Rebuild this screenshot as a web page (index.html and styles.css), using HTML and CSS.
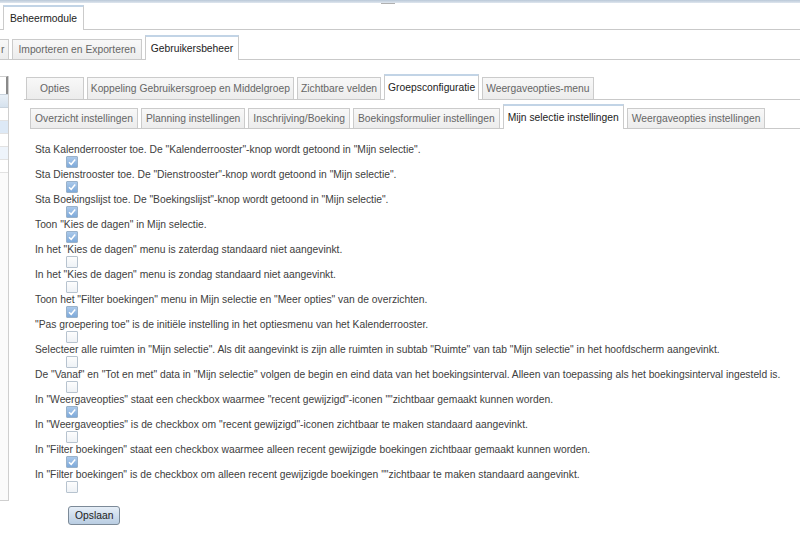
FILE: index.html
```html
<!DOCTYPE html>
<html lang="nl">

<head>
    <meta charset="UTF-8">
    <meta name="viewport" content="width=device-width, initial-scale=1.0">
    <title>Beheermodule</title>
    <link rel="stylesheet" href="styles.css">
</head>

<body>
    <div class="topbar"><span class="grip"></span></div>

    <div class="tabs tabs-main">
        <div class="tab active">Beheermodule</div>
    </div>

    <div class="tabs tabs-module">
        <div class="tab tab-cut">r</div>
        <div class="tab">Importeren en Exporteren</div>
        <div class="tab active">Gebruikersbeheer</div>
    </div>

    <div class="workspace">
        <div class="sidebar">
            <div class="side-field"></div>
            <div class="side-head"></div>
            <div class="side-row"></div>
            <div class="side-row selected"></div>
            <div class="side-row"></div>
            <div class="side-row light"></div>
            <div class="side-row"></div>
        </div>

        <div class="panel">
            <div class="tabs tabs-group">
                <div class="tab tab-wide">Opties</div>
                <div class="tab">Koppeling Gebruikersgroep en Middelgroep</div>
                <div class="tab">Zichtbare velden</div>
                <div class="tab active">Groepsconfiguratie</div>
                <div class="tab">Weergaveopties-menu</div>
            </div>

            <div class="tabs tabs-sub">
                <div class="tab">Overzicht instellingen</div>
                <div class="tab">Planning instellingen</div>
                <div class="tab">Inschrijving/Boeking</div>
                <div class="tab">Boekingsformulier instellingen</div>
                <div class="tab active">Mijn selectie instellingen</div>
                <div class="tab">Weergaveopties instellingen</div>
            </div>

            <form class="settings">
                <div class="setting">
                    <div class="label">Sta Kalenderrooster toe. De "Kalenderrooster"-knop wordt getoond in "Mijn selectie".</div>
                    <span class="check on"></span>
                </div>
                <div class="setting">
                    <div class="label">Sta Dienstrooster toe. De "Dienstrooster"-knop wordt getoond in "Mijn selectie".</div>
                    <span class="check on"></span>
                </div>
                <div class="setting">
                    <div class="label">Sta Boekingslijst toe. De "Boekingslijst"-knop wordt getoond in "Mijn selectie".</div>
                    <span class="check on"></span>
                </div>
                <div class="setting">
                    <div class="label">Toon "Kies de dagen" in Mijn selectie.</div>
                    <span class="check on"></span>
                </div>
                <div class="setting">
                    <div class="label">In het "Kies de dagen" menu is zaterdag standaard niet aangevinkt.</div>
                    <span class="check"></span>
                </div>
                <div class="setting">
                    <div class="label">In het "Kies de dagen" menu is zondag standaard niet aangevinkt.</div>
                    <span class="check"></span>
                </div>
                <div class="setting">
                    <div class="label">Toon het "Filter boekingen" menu in Mijn selectie en "Meer opties" van de overzichten.</div>
                    <span class="check on"></span>
                </div>
                <div class="setting">
                    <div class="label">"Pas groepering toe" is de initiële instelling in het optiesmenu van het Kalenderrooster.</div>
                    <span class="check"></span>
                </div>
                <div class="setting">
                    <div class="label">Selecteer alle ruimten in "Mijn selectie". Als dit aangevinkt is zijn alle ruimten in subtab "Ruimte" van tab "Mijn selectie" in het hoofdscherm aangevinkt.</div>
                    <span class="check"></span>
                </div>
                <div class="setting">
                    <div class="label">De "Vanaf" en "Tot en met" data in "Mijn selectie" volgen de begin en eind data van het boekingsinterval. Alleen van toepassing als het boekingsinterval ingesteld is.</div>
                    <span class="check"></span>
                </div>
                <div class="setting">
                    <div class="label">In "Weergaveopties" staat een checkbox waarmee "recent gewijzigd"-iconen ""zichtbaar gemaakt kunnen worden.</div>
                    <span class="check on"></span>
                </div>
                <div class="setting">
                    <div class="label">In "Weergaveopties" is de checkbox om "recent gewijzigd"-iconen zichtbaar te maken standaard aangevinkt.</div>
                    <span class="check"></span>
                </div>
                <div class="setting">
                    <div class="label">In "Filter boekingen" staat een checkbox waarmee alleen recent gewijzigde boekingen zichtbaar gemaakt kunnen worden.</div>
                    <span class="check on"></span>
                </div>
                <div class="setting">
                    <div class="label">In "Filter boekingen" is de checkbox om alleen recent gewijzigde boekingen ""zichtbaar te maken standaard aangevinkt.</div>
                    <span class="check"></span>
                </div>

                <button type="button" class="save">Opslaan</button>
            </form>
        </div>
    </div>
</body>

</html>
```

FILE: styles.css
```css
body {
    font-family: 'Liberation Sans', Arial, sans-serif;
    font-size: 10.3px;
    color: #404040;
    background-color: #fff;
    margin: 0;
    height: 549px;
    overflow: hidden;
}

.topbar {
    height: 3px;
    background: linear-gradient(#b9c8d8, #dfe6ee);
    display: flex;
    justify-content: center;
}

.grip {
    width: 14px;
    height: 1px;
    margin-top: 3px;
    margin-left: -24px;
    background-color: #b0b0b0;
}

/* tab strips */

.tabs {
    display: flex;
    align-items: flex-end;
    gap: 3px;
    border-bottom: 1px solid #c9c9c9;
}

.tab {
    height: 19px;
    line-height: 19px;
    padding: 0 4px;
    border: 1px solid #cbcbcb;
    border-bottom: none;
    background: linear-gradient(#f8f8f8, #ececec);
    color: #666;
    white-space: nowrap;
}

.tab.active {
    height: 23px;
    line-height: 23px;
    margin-bottom: -1px;
    border-top: 2px solid #c2d4e6;
    background: #fff;
    color: #222;
}

.tabs-main {
    height: 26px;
    padding-left: 3px;
}

.tabs-main .tab {
    padding: 0 6px;
}

.tabs-module {
    height: 29px;
    margin-left: -3px;
}

.tabs-module .tab {
    padding: 0 5px;
}

.tabs-module .tab-cut {
    padding: 0 4px 0 3px;
}

/* lower area */

.workspace {
    display: flex;
    align-items: flex-start;
}

.sidebar {
    width: 8px;
    height: 424px;
    margin-top: 16px;
    border: 1px solid #cfcfcf;
    border-left: none;
    border-top: none;
    background-color: #fbfbfb;
}

.side-field {
    height: 17px;
    border-right: 2px solid #8a8a8a;
    border-top: 1px solid #cfcfcf;
    background-color: #fff;
}

.side-head {
    height: 12px;
    border-top: 1px solid #c9d3dd;
    border-bottom: 1px solid #c9d3dd;
    background: linear-gradient(#e9f0f7, #d6e2ee);
}

.side-row {
    height: 12px;
    border-bottom: 1px solid #e2e2e2;
    background-color: #fff;
}

.side-row.selected {
    background-color: #dde9f6;
}

.side-row.light {
    background-color: #eef4fb;
}

.panel {
    flex: 1;
    padding-left: 15px;
}

.tabs-group {
    height: 26px;
    margin-top: 13px;
    padding-left: 2px;
}

.tabs-group .tab {
    height: 21px;
    line-height: 21px;
    padding: 0 3px;
}

.tabs-group .tab-wide {
    padding: 0 13px;
}

.tabs-group .tab.active {
    height: 24px;
    line-height: 24px;
}

.tabs-sub {
    height: 24px;
    margin-top: 4px;
    margin-left: 6px;
}

.tabs-sub .tab.active {
    height: 23px;
}

/* settings list */

.settings {
    padding: 14px 0 0 11px;
}

.setting {
    display: flex;
    flex-direction: column;
}

.label {
    height: 13px;
    line-height: 13px;
    white-space: nowrap;
}

.check {
    width: 10px;
    height: 10px;
    margin-left: 31px;
    border: 1px solid #b7c3cf;
    border-radius: 1px;
    background: linear-gradient(#fdfdfd, #eef2f6);
}

.check.on {
    border-color: #9ab2ca;
    background:
        url("data:image/svg+xml,%3Csvg xmlns='http://www.w3.org/2000/svg' viewBox='0 0 10 10'%3E%3Cpath d='M2 5.2 4.2 7.3 8.2 2.6' fill='none' stroke='%23fff' stroke-width='1.5'/%3E%3C/svg%3E") center / 10px 10px no-repeat,
        linear-gradient(#abc9ea, #7eaada);
}

.save {
    margin: 13px 0 0 33px;
    height: 19px;
    padding: 0 6px;
    font-family: inherit;
    font-size: 10.3px;
    color: #222;
    border: 1px solid #7c8a98;
    border-radius: 3px;
    background: linear-gradient(#e6eef7, #b9cde2);
}
```
